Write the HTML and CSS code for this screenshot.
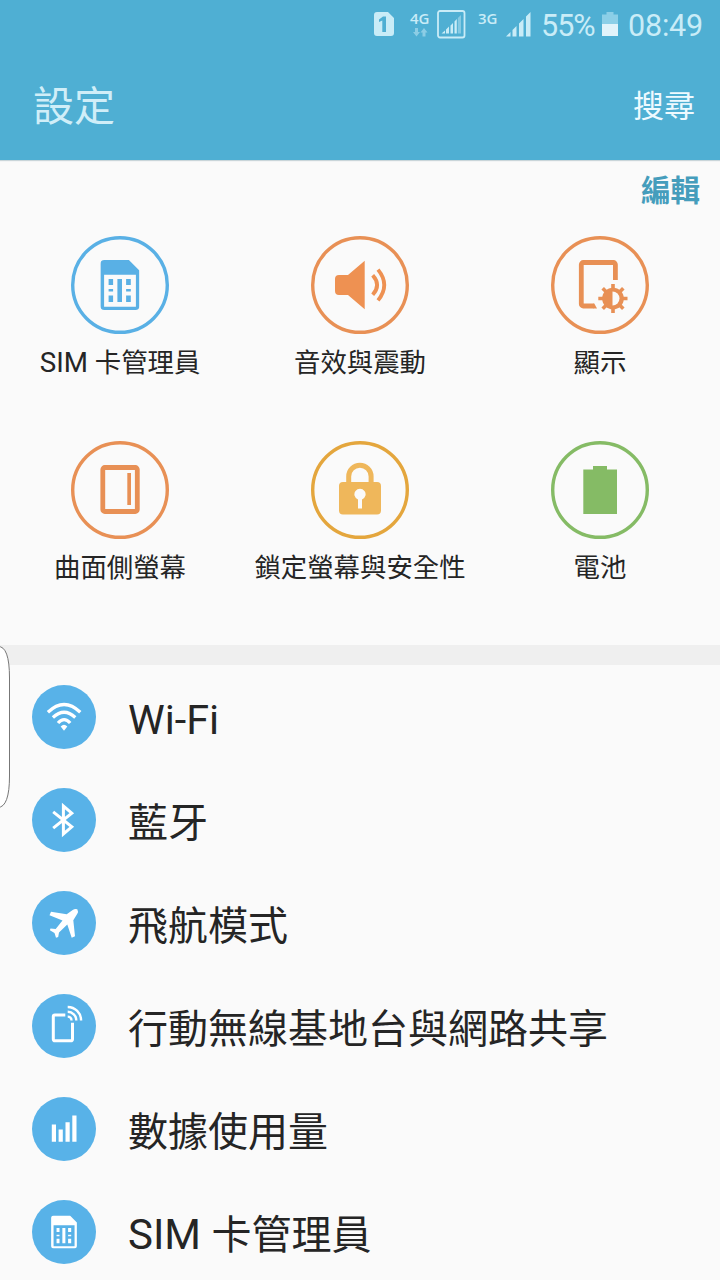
FILE: index.html
```html
<!DOCTYPE html>
<html lang="zh-Hant">
<head>
<meta charset="utf-8">
<title>設定</title>
<link rel="stylesheet" href="styles.css">
</head>
<body>
<svg class="defs" width="0" height="0">
  <symbol id="sim" viewBox="0 0 39 50">
    <path fill="currentColor" fill-rule="evenodd" d="M4 0H28.5L39 10.5V46a4 4 0 0 1-4 4H4a4 4 0 0 1-4-4V4a4 4 0 0 1 4-4ZM3.700 14.700V46.700H35.500V14.700Z"/>
    <path fill="currentColor" d="M8.200 19h4.500v6H8.200zM8.200 29h4.500v2.400H8.200zM8.200 35.400h4.500V42H8.200zM17 19h4.600v23H17zM25.700 19h4.700v6h-4.700zM25.700 29h4.700v2.400h-4.700zM25.700 35.400h4.700V42h-4.700z"/>
  </symbol>
</svg>

<header class="header">
  <div class="status">
    <svg class="status-sim" width="20" height="24" viewBox="0 0 20 24"><path fill="currentColor" fill-rule="evenodd" d="M3 0H14L20 6V21a3 3 0 0 1-3 3H3a3 3 0 0 1-3-3V3a3 3 0 0 1 3-3ZM9 4.500 5 7.500V10l3.300-1.500V20h3.700V4.500Z"/></svg>
    <div class="network">
      <span class="net-label">4G</span>
      <svg class="arrows" width="15" height="9" viewBox="0 0 15 9"><path fill="currentColor" d="M2 0h3v4h2L3.500 8.500 0 4h2zM9.500 8.500h3v-4h2L11 0 7.500 4.500h2z"/></svg>
    </div>
    <svg class="signal-box" width="29" height="29" viewBox="0 0 29 29">
      <rect x="1" y="1" width="26.500" height="26.500" rx="2" fill="none" stroke="currentColor" stroke-width="1.800"/>
      <path fill="currentColor" d="M4.500 23.500 8 20.500v3zM9 19.500l3-3v7H9zM13.500 15.500l2.500-2.500v10.500h-2.500zM17.500 11.500l2.300-2.500v14.500h-2.300z"/>
      <path fill="currentColor" opacity=".45" d="M20.800 8 24 5v18.500h-3.200z"/>
    </svg>
    <div class="network network-second"><span class="net-label">3G</span></div>
    <svg class="signal" width="25" height="25" viewBox="0 0 25 25"><path fill="currentColor" d="M0 24.500 4.500 20v4.500zM6.500 18l4-4v10.500h-4zM13 11.500 17.500 7v17.500H13zM20 4.500 24.500 0v24.500H20z"/></svg>
    <span class="percent">55%</span>
    <svg class="status-battery" width="16" height="24" viewBox="0 0 16 24"><path fill="#8ccfe7" d="M4.500 0h7v2.500H16V12H0V2.500h4.500z"/><path fill="#e1f3fa" d="M0 12h16v12H0z"/></svg>
    <span class="clock">08:49</span>
  </div>
  <div class="titlebar">
    <h1 class="title">設定</h1>
    <span class="search">搜尋</span>
  </div>
</header>

<main class="content">
  <section class="quick">
    <div class="edit">編輯</div>
    <div class="quick-grid">
      <div class="quick-item">
        <svg class="quick-icon blue" viewBox="11 11 98 98"><circle class="ring" cx="60" cy="60" r="47.300"/><use href="#sim" x="40.400" y="35" width="39" height="50"/></svg>
        <span class="quick-label"><span class="latin">SIM </span>卡管理員</span>
      </div>
      <div class="quick-item">
        <svg class="quick-icon orange" viewBox="11 11 98 98"><circle class="ring" cx="60" cy="60" r="47.300"/>
          <path fill="#ee9152" d="M39 50h9L64.700 35.700V84.300L48 70h-9a4 4 0 0 1-4-4V54a4 4 0 0 1 4-4z"/>
          <path fill="none" stroke="#ee9152" stroke-width="3.800" d="M72.700 50.200Q81.500 60 72.700 69.800M78 44.600Q90.500 60 78 75.400"/></svg>
        <span class="quick-label">音效與震動</span>
      </div>
      <div class="quick-item">
        <svg class="quick-icon orange" viewBox="11 11 98 98"><circle class="ring" cx="60" cy="60" r="47.300"/>
          <path fill="none" stroke="currentColor" stroke-width="4.800" d="M75.400 55V39.500a2 2 0 0 0-2-2H43.300a2 2 0 0 0-2 2V79a2 2 0 0 0 2 2H53.500"/>
          <path fill="currentColor" d="M53 78.600h1.300l2.700 4.800h-4z"/>
          <path stroke="currentColor" stroke-width="3.600" d="M73 59v6M73 82v6M58.300 73.500h6M81.500 73.500h6M62.700 63.200l4.200 4.200M79.100 79.600l4.200 4.200M62.700 83.800l4.200-4.200M79.100 67.400l4.200-4.200"/>
          <circle cx="73" cy="73.500" r="10.800" fill="currentColor"/>
          <path fill="#fafafa" d="M72.500 66.500a7 7 0 0 1 0 14z"/></svg>
        <span class="quick-label">顯示</span>
      </div>
      <div class="quick-item">
        <svg class="quick-icon orange" viewBox="11 11 98 98"><circle class="ring" cx="60" cy="60" r="47.300"/>
          <rect x="42.800" y="37.500" width="34.500" height="44" rx="2" fill="none" stroke="currentColor" stroke-width="4.800"/><path fill="currentColor" d="M67.300 43H71v32h-3.700z"/></svg>
        <span class="quick-label">曲面側螢幕</span>
      </div>
      <div class="quick-item">
        <svg class="quick-icon yellow" viewBox="11 11 98 98"><circle class="ring" cx="60" cy="60" r="47.300"/>
          <path fill="none" stroke="#efb75b" stroke-width="5" d="M48.700 53V46.500a11.200 11.200 0 0 1 22.400 0V53"/>
          <path fill="#efb75b" fill-rule="evenodd" d="M43 52H77a4 4 0 0 1 4 4V80.500a4 4 0 0 1-4 4H43a4 4 0 0 1-4-4V56a4 4 0 0 1 4-4ZM58 69.500V78.500H62V69.500a5.600 5.600 0 1 0-4 0Z"/></svg>
        <span class="quick-label">鎖定螢幕與安全性</span>
      </div>
      <div class="quick-item">
        <svg class="quick-icon green" viewBox="11 11 98 98"><circle class="ring" cx="60" cy="60" r="47.300"/><path fill="currentColor" d="M53 36h14v3.500h10V84H43.300V39.500H53z"/></svg>
        <span class="quick-label">電池</span>
      </div>
    </div>
  </section>

  <section class="list">
    <div class="row">
      <svg class="row-icon" viewBox="0 0 64 64"><circle cx="32" cy="32.500" r="32" fill="#58b2e8"/><g fill="none" stroke="#fff" stroke-width="3.300"><path d="M15.900 27.800Q32.100 12.200 48.300 27.800"/><path d="M20.900 33Q32.100 22.600 43.300 33"/><path d="M26 38.500Q32.100 31.700 38.200 38.500"/></g><path fill="#fff" d="M28.700 42.100Q32 38.500 35.300 42.100L32 46.300z"/></svg>
      <span class="row-label latin">Wi-Fi</span>
    </div>
    <div class="row">
      <svg class="row-icon" viewBox="0 0 64 64"><circle cx="32" cy="32.500" r="32" fill="#58b2e8"/><path fill="none" stroke="#fff" stroke-width="3" stroke-miterlimit="10" d="M21.200 24.300 39.800 39.300 31.400 46.500V18.500L39.800 25.700 21.200 40.700"/></svg>
      <span class="row-label">藍牙</span>
    </div>
    <div class="row">
      <svg class="row-icon" viewBox="0 0 64 64"><circle cx="32" cy="32.500" r="32" fill="#58b2e8"/><path fill="#fff" transform="translate(0 .5)" d="M34.700 23.200 40.700 18.900Q43 17.500 45.300 18.300Q46.600 20.600 45.300 22.800L41.300 29.200 43 45.300 39.700 46.800 35.300 33.500 27 41.500 26.200 46 24 46.700 22.500 42 17.900 39.300 18.500 37.500 23.700 37.900 30.500 29.500 17.500 24.300 19 20.700z"/></svg>
      <span class="row-label">飛航模式</span>
    </div>
    <div class="row">
      <svg class="row-icon" viewBox="0 0 64 64"><circle cx="32" cy="32.500" r="32" fill="#58b2e8"/><g fill="none" stroke="#fff" transform="translate(0 .5)"><path stroke-width="3" d="M33.300 21H22.800a1.500 1.500 0 0 0-1.500 1.500V45.300a1.500 1.500 0 0 0 1.500 1.500H39a1.500 1.500 0 0 0 1.500-1.500V28.800"/><path stroke-width="2.400" d="M35.700 22.600a3.800 3.800 0 0 1 3.800 3.800M35.700 17.800a8.600 8.600 0 0 1 8.600 8.600M35.700 13a13.400 13.400 0 0 1 13.400 13.400"/></g></svg>
      <span class="row-label">行動無線基地台與網路共享</span>
    </div>
    <div class="row">
      <svg class="row-icon" viewBox="0 0 64 64"><circle cx="32" cy="32.500" r="32" fill="#58b2e8"/><path fill="#fff" transform="translate(0 .5)" d="M19.800 27.500H24V44.800H19.800zM26.600 32.500h4.200v12.300h-4.200zM33.500 25.200h4.200v19.600h-4.200zM40.300 18.500h4.200v26.300h-4.200z"/></svg>
      <span class="row-label">數據使用量</span>
    </div>
    <div class="row">
      <svg class="row-icon" viewBox="0 0 64 64"><circle cx="32" cy="32.500" r="32" fill="#58b2e8"/><use href="#sim" x="19" y="16" width="26" height="33"/></svg>
      <span class="row-label row-label-mixed"><span class="latin">SIM </span>卡管理員</span>
    </div>
  </section>
</main>

<svg class="edge-handle" width="11" height="164" viewBox="0 0 11 164"><path fill="#fff" stroke="#777" stroke-width="1" d="M-2 1.500Q9.500 1 9.500 33V131Q9.500 162 -2 162.500"/></svg>
</body>
</html>
```

FILE: styles.css
```css
* { box-sizing: border-box; }

body {
  position: relative;
  width: 720px;
  height: 1280px;
  margin: 0;
  overflow: hidden;
  background: #fafafa;
  color: #252525;
  font-family: Roboto, "Noto Sans CJK TC", sans-serif;
}

svg { display: block; flex: none; }
.defs { position: absolute; }
.latin { font-size: 1.05em; }

.header {
  height: 160px;
  background: #4fafd3;
  color: #d0eef8;
  box-shadow: 0 1px 1px #c9d5d9;
}

.status {
  display: flex;
  align-items: flex-start;
  justify-content: flex-end;
  height: 50px;
  padding-right: 17px;
  color: #c9ecf7;
}

.status-sim { margin: 12px 16px 0 0; }
.network { width: 20px; padding-top: 10px; }
.net-label {
  display: block;
  font: 600 15px/16px "Open Sans", sans-serif;
}
.arrows { margin: 2px 0 0 3px; opacity: .5; }
.signal-box { margin: 9.500px 12px 0 7px; }
.network-second { margin-right: 8px; }
.signal { margin: 11.500px 10px 0 0; }
.percent, .clock {
  font-size: 30.500px;
  font-weight: 400;
  line-height: 52px;
}
.percent { width: 55px; letter-spacing: -1px; white-space: nowrap; }
.status-battery { margin: 12px 10px 0 6px; }
.clock { width: 75px; letter-spacing: -.2px; white-space: nowrap; }

.titlebar {
  display: flex;
  align-items: center;
  justify-content: space-between;
  height: 110px;
  padding: 4px 25px 0 33px;
}
.title { margin: 0; font-size: 41px; font-weight: 400; line-height: 60px; }
.search { color: #eefaff; font-size: 31px; line-height: 60px; }

.quick {
  height: 505px;
  border-bottom: 20px solid #efefef;
}
.edit {
  height: 60px;
  padding: 1px 20px 0 0;
  color: #459dbc;
  font-size: 29.500px;
  font-weight: 700;
  line-height: 60px;
  text-align: right;
}
.quick-grid {
  display: grid;
  grid-template-columns: repeat(3, 240px);
  grid-auto-rows: 205px;
  padding-top: 16px;
}
.quick-item {
  display: flex;
  flex-direction: column;
  align-items: center;
}
.quick-icon { width: 98px; height: 98px; }
.ring { fill: none; stroke: currentColor; stroke-width: 3.400; }
.blue { color: #59b0e5; }
.orange { color: #e89055; }
.yellow { color: #e4a63d; }
.green { color: #85bb65; }
.quick-label {
  margin-top: 9px;
  font-size: 26.400px;
  line-height: 40px;
  white-space: nowrap;
}

.row {
  display: flex;
  align-items: center;
  gap: 32px;
  height: 103px;
  padding-left: 32px;
}
.row-icon {
  width: 64px;
  height: 65px;
  overflow: visible;
  color: #fff;
}
.row-label { padding-top: 9px; font-size: 40px; line-height: 60px; white-space: nowrap; }
.row-label.latin { padding-top: 6px; font-size: 41.400px; }
.row-label-mixed { padding-top: 7px; }

.edge-handle { position: absolute; left: 0; top: 645px; }
```
